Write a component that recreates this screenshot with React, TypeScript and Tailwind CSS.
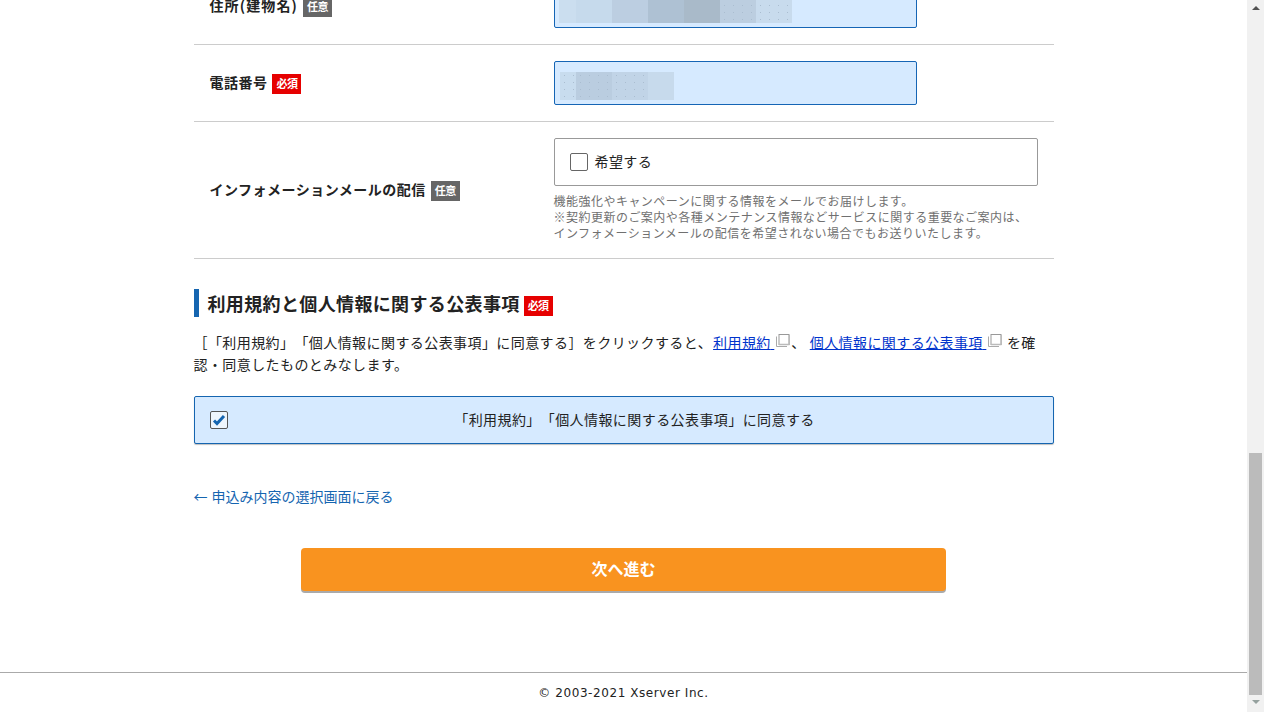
const Badge: React.FC<{ required?: boolean }> = ({ required }) => {
  return (
    <span
      className={`inline-flex h-5 w-[29px] shrink-0 items-center justify-center text-[11px] font-bold tracking-[-0.5px] text-white ${
        required ? "bg-[#e60000]" : "bg-[#666666]"
      }`}
    >
      {required ? "必須" : "任意"}
    </span>
  );
};

const Mosaic: React.FC<{ cells: { width: string; color: string; dots?: boolean }[]; className: string }> = ({
  cells,
  className,
}) => {
  return (
    <div className={`flex h-7 ${className}`}>
      {cells.map((cell, i) => (
        <div
          key={i}
          className={
            cell.dots
              ? "bg-[radial-gradient(#aabdd0_0.5px,transparent_0.8px)] bg-[length:9px_7px]"
              : ""
          }
          style={{ width: cell.width, backgroundColor: cell.color }}
        />
      ))}
    </div>
  );
};

const BlurInput: React.FC<{ children: React.ReactNode }> = ({ children }) => {
  return (
    <div className="h-11 w-[363px] rounded-[2px] border border-[#1565b5] bg-[#d6eaff]">{children}</div>
  );
};

const Row: React.FC<{ label: string; required?: boolean; wide?: boolean; children: React.ReactNode }> = ({
  label,
  required,
  wide,
  children,
}) => {
  return (
    <div className="flex border-b border-[#cccccc] py-4">
      <div className="flex w-[360px] shrink-0 items-center gap-[5px] pl-4 text-sm font-bold text-[#222222]">
        <span className={`mb-[2px] ${wide ? "tracking-[0.08em]" : "tracking-[0.035em]"}`}>{label}</span>
        <span className="mt-[2px] flex">
          <Badge required={required} />
        </span>
      </div>
      <div className="flex-1 pr-4">{children}</div>
    </div>
  );
};

const ExternalIcon: React.FC = () => {
  return (
    <svg className="mx-[1px] inline-block align-[0px]" width="15" height="14" viewBox="0 0 15 14" fill="none">
      <path d="M1.5 2.5V12.5H12" stroke="#aaaaaa" />
      <rect x="4" y="0.5" width="10" height="10" fill="#ffffff" stroke="#999999" />
      <path d="M4 10.5H14.5M14.5 1V11" stroke="#bbbbbb" strokeWidth="1.5" />
    </svg>
  );
};

export default function App() {
  return (
    <div className="flex h-screen overflow-hidden bg-white font-['Noto_Sans_CJK_JP','Liberation_Sans',sans-serif] text-[#222222] [text-spacing-trim:space-all]">
      <div className="min-w-0 flex-1">
        <div className="mx-auto -mt-8 w-[860px]">
          <Row label="住所(建物名)" wide>
            <BlurInput>
              <Mosaic
                className="ml-1 mt-[10px]"
                cells={[
                  { width: "17px", color: "#cbdeef" },
                  { width: "36px", color: "#c6daec" },
                  { width: "36px", color: "#bccee1" },
                  { width: "36px", color: "#aec1d3" },
                  { width: "36px", color: "#a9bac9" },
                  { width: "36px", color: "#bccee0", dots: true },
                  { width: "36px", color: "#c8dbed", dots: true },
                ]}
              />
            </BlurInput>
          </Row>
          <Row label="電話番号" required>
            <BlurInput>
              <Mosaic
                className="ml-[5px] mt-[10px]"
                cells={[
                  { width: "16px", color: "#c8dcee", dots: true },
                  { width: "36px", color: "#bacde0", dots: true },
                  { width: "36px", color: "#c1d4e7", dots: true },
                  { width: "26px", color: "#c7daec" },
                ]}
              />
            </BlurInput>
          </Row>
          <Row label="インフォメーションメールの配信">
            <label className="flex h-12 items-center gap-[7px] rounded-[2px] border border-[#999999] pl-[15px] text-sm tracking-[0.03em]">
              <span className="h-[18px] w-[18px] rounded-[2px] border border-[#666666] bg-white" />
              <span className="mb-[3px]">希望する</span>
            </label>
            <p className="mb-px mt-[7px] text-xs leading-4 tracking-[0.04em] text-[#707070]">
              機能強化やキャンペーンに関する情報をメールでお届けします。
              <br />
              ※契約更新のご案内や各種メンテナンス情報などサービスに関する重要なご案内は、
              <br />
              インフォメーションメールの配信を希望されない場合でもお送りいたします。
            </p>
          </Row>

          <h2 className="mt-[30px] flex h-7 items-center border-l-[5px] border-[#1565b0] pl-[9px] text-lg font-bold tracking-[0.02em]">
            利用規約と個人情報に関する公表事項
            <span className="ml-1 mt-[6px] flex">
              <Badge required />
            </span>
          </h2>
          <p className="mt-[14px] whitespace-nowrap text-sm leading-[22px] tracking-[0.03em]">
            ［「利用規約」「個人情報に関する公表事項」に同意する］をクリックすると、
            <a className="ml-px whitespace-pre text-[#0033cc] underline" href="#">
              利用規約{" "}
            </a>
            <ExternalIcon />、
            <a className="ml-1 whitespace-pre text-[#0033cc] underline" href="#">
              個人情報に関する公表事項{" "}
            </a>
            <ExternalIcon /> を確
            <br />
            認・同意したものとみなします。
          </p>

          <label className="mt-[21px] flex h-12 items-center rounded-[2px] border border-[#1565b0] bg-[#d6eaff] px-[15px] text-sm shadow-[0_1px_1px_rgba(0,0,0,0.25)]">
            <span className="flex h-[18px] w-[18px] shrink-0 items-center justify-center rounded-[2px] border border-[#555555] bg-[#eef5fc]">
              <svg width="14" height="12" viewBox="0 0 14 12" fill="none">
                <path d="M2 6.5L5 9.5L12 2" stroke="#1565b0" strokeWidth="3" />
              </svg>
            </span>
            <span className="mb-[3px] ml-1 flex-1 text-center tracking-[0.03em]">
              「利用規約」「個人情報に関する公表事項」に同意する
            </span>
          </label>

          <a className="mt-[41px] block text-sm leading-[22px] text-[#1565b0]" href="#">
            <span className="mr-1">←</span>申込み内容の選択画面に戻る
          </a>
        </div>

        <button className="mx-auto mt-[41px] block h-[43px] w-[645px] rounded-[4px] bg-[#f9931f] pb-1 text-base font-bold text-white shadow-[0_2px_0_#aaaaaa]">
          次へ進む
        </button>

        <footer className="mt-[81px] border-t border-[#aaaaaa] pt-[11px] text-center font-['DejaVu_Sans',sans-serif] text-xs leading-[18px] tracking-[0.57px]">
          © 2003-2021 Xserver Inc.
        </footer>
      </div>

      <div className="flex w-[17px] shrink-0 flex-col items-center bg-[#f1f1f1]">
        <div className="mt-[6px] h-0 w-0 border-x-[4px] border-b-[4px] border-x-transparent border-b-[#505050]" />
        <div className="mt-auto h-[242px] w-[13px] bg-[#bbbbbb]" />
        <div className="mb-[8px] mt-[5px] h-0 w-0 border-x-[4px] border-t-[4px] border-x-transparent border-t-[#95a19e]" />
      </div>
    </div>
  );
}
